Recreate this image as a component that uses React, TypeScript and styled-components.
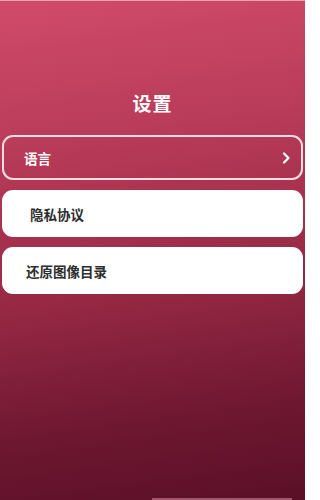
import styled, { createGlobalStyle } from 'styled-components';

const GlobalStyle = createGlobalStyle`
    html, body {
        margin: 0;
        padding: 0;
    }
    body {
        font-family: 'Noto Sans CJK SC', 'Noto Sans', sans-serif;
    }
`;

const Screen = styled.div`
    box-sizing: border-box;
    width: 305px;
    height: 500px;
    display: flex;
    flex-direction: column;
    padding: 0 2px;
    border-top: 1px solid #f2a3b3;
    background: linear-gradient(172deg, #d04b69 0%, #b63a58 30%, #952843 58%, #6e1731 82%, #5a1027 100%);
    overflow: hidden;
`;

const Title = styled.h1`
    margin: 89px 0 20px;
    height: 25px;
    line-height: 25px;
    text-align: center;
    font-size: 19px;
    font-weight: 700;
    color: #ffffff;
    letter-spacing: 1px;
`;

const MenuList = styled.div`
    display: flex;
    flex-direction: column;
    gap: 10px;
`;

const MenuItem = styled.div<{ $active?: boolean; $indent: number }>`
    box-sizing: border-box;
    height: ${({ $active }) => ($active ? '45px' : '47px')};
    display: flex;
    align-items: center;
    justify-content: space-between;
    padding: 0 10px 0 ${({ $indent }) => $indent}px;
    border-radius: 11px;
    border: ${({ $active }) => ($active ? '2px solid #f6dde2' : 'none')};
    background: ${({ $active }) => ($active ? 'transparent' : '#ffffff')};
    color: ${({ $active }) => ($active ? '#ffffff' : '#2e2e2e')};
    font-size: 13.5px;
    font-weight: 600;
    cursor: pointer;
`;

const Chevron = styled.svg`
    width: 10px;
    height: 14px;
    flex-shrink: 0;
`;

const HomeBar = styled.div`
    margin: auto 11px 0 auto;
    width: 140px;
    height: 2px;
    background: #a0566c;
`;

const items = [
    { label: '语言', active: true, indent: 20 },
    { label: '隐私协议', indent: 28 },
    { label: '还原图像目录', indent: 24 },
];

const App = () => {
    return (
        <>
            <GlobalStyle />
            <Screen>
                <Title>设置</Title>
                <MenuList>
                    {items.map((item) => (
                        <MenuItem key={item.label} $active={item.active} $indent={item.indent}>
                            {item.label}
                            {item.active && (
                                <Chevron viewBox="0 0 10 14">
                                    <path
                                        d="M3 2.5 L7.5 7 L3 11.5"
                                        fill="none"
                                        stroke="#ffffff"
                                        strokeWidth="2.2"
                                        strokeLinecap="round"
                                        strokeLinejoin="round"
                                    />
                                </Chevron>
                            )}
                        </MenuItem>
                    ))}
                </MenuList>
                <HomeBar />
            </Screen>
        </>
    );
};

export default App;
